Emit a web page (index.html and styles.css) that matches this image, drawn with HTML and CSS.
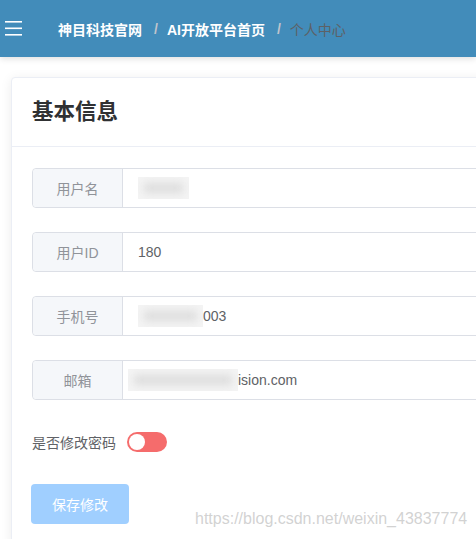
FILE: index.html
```html
<!DOCTYPE html>
<html lang="zh">
<head>
    <meta charset="UTF-8">
    <title>个人中心</title>
    <link rel="stylesheet" href="styles.css">
</head>
<body>
    <header class="topbar">
        <svg class="menu-icon" width="17" height="16" viewBox="0 0 17 16">
            <rect x="0" y="1" width="17" height="1.6" fill="#fff"/>
            <rect x="0" y="7.5" width="17" height="1.6" fill="#fff"/>
            <rect x="0" y="14" width="17" height="1.6" fill="#fff"/>
        </svg>
        <nav class="crumbs">
            <span class="crumb link">神目科技官网</span>
            <span class="sep">/</span>
            <span class="crumb link">AI开放平台首页</span>
            <span class="sep">/</span>
            <span class="crumb current">个人中心</span>
        </nav>
    </header>

    <main class="page">
        <div class="card">
            <div class="card-header">基本信息</div>
            <div class="card-body">
                <div class="field">
                    <div class="field-label">用户名</div>
                    <div class="field-value"><span class="blur w50"></span></div>
                </div>
                <div class="field">
                    <div class="field-label">用户ID</div>
                    <div class="field-value">180</div>
                </div>
                <div class="field">
                    <div class="field-label">手机号</div>
                    <div class="field-value"><span class="blur w67"></span>003</div>
                </div>
                <div class="field">
                    <div class="field-label">邮箱</div>
                    <div class="field-value mail"><span class="blur w110"></span>ision.com</div>
                </div>

                <div class="switch-row">
                    <span class="switch-label">是否修改密码</span>
                    <span class="switch"><span class="knob"></span></span>
                </div>

                <button class="btn-save" disabled>保存修改</button>
            </div>
        </div>
    </main>

    <div class="watermark">https://blog.csdn.net/weixin_43837774</div>
</body>
</html>
```

FILE: styles.css
```css
body {
    margin: 0;
    padding: 0;
    width: 476px;
    height: 539px;
    overflow: hidden;
    background-color: #fff;
    font-family: "Liberation Sans", "Noto Sans CJK SC", sans-serif;
    position: relative;
}

.topbar {
    height: 57px;
    background-color: #428cba;
    display: flex;
    align-items: center;
    box-shadow: 0 2px 6px rgba(0, 0, 0, 0.12);
    position: relative;
    z-index: 2;
}

.menu-icon {
    margin-left: 5px;
    margin-top: -1px;
}

.crumbs {
    margin-left: 36px;
    display: flex;
    align-items: center;
    font-size: 14px;
}

.crumb.link {
    color: #fff;
    font-weight: bold;
}

.crumb.current {
    color: #5d6166;
}

.sep {
    color: #c0c4cc;
    margin: 0 9px 0 12px;
    font-weight: bold;
}

.page {
    padding: 20px 0 0 11px;
    overflow: hidden;
}

.card {
    margin-right: -40px;
    background-color: #fff;
    border: 1px solid #ebeef5;
    border-radius: 4px;
    box-shadow: 0 2px 12px rgba(0, 0, 0, 0.08);
}

.card-header {
    height: 68px;
    line-height: 68px;
    padding: 0 20px;
    border-bottom: 1px solid #ebeef5;
    font-size: 21.5px;
    font-weight: bold;
    color: #303133;
}

.card-body {
    padding: 21px 20px 20px 20px;
}

.field {
    display: flex;
    height: 40px;
    margin-bottom: 24px;
    border: 1px solid #dcdfe6;
    border-radius: 4px;
    box-sizing: border-box;
    font-size: 14px;
}

.field-label {
    width: 89px;
    background-color: #f5f7fa;
    border-right: 1px solid #dcdfe6;
    border-radius: 4px 0 0 4px;
    color: #909399;
    display: flex;
    align-items: center;
    justify-content: center;
}

.field-value {
    flex: 1;
    display: flex;
    align-items: center;
    padding-left: 15px;
    color: #606266;
}

.field-value.mail {
    padding-left: 5px;
}

.blur {
    display: inline-block;
    height: 22px;
    background-color: #f4f4f4;
    position: relative;
    overflow: hidden;
}

.blur::after {
    content: "";
    position: absolute;
    left: 6px;
    right: 6px;
    top: 6px;
    bottom: 6px;
    background-color: #dcdcdc;
    filter: blur(4px);
}

.w50 { width: 51px; }
.w67 { width: 65px; }
.w110 { width: 110px; }

.switch-row {
    display: flex;
    align-items: center;
    height: 40px;
    margin-top: -2px;
    margin-bottom: 22px;
}

.switch-label {
    font-size: 14px;
    color: #606266;
    margin-right: 11px;
}

.switch {
    width: 40px;
    height: 20px;
    border-radius: 10px;
    background-color: #f56c6c;
    position: relative;
}

.knob {
    position: absolute;
    left: 2px;
    top: 2px;
    width: 16px;
    height: 16px;
    border-radius: 50%;
    background-color: #fff;
}

.btn-save {
    margin-left: -1px;
    width: 98px;
    height: 40px;
    border: none;
    border-radius: 4px;
    background-color: #a0cfff;
    color: #fff;
    font-size: 14px;
    font-family: "Liberation Sans", "Noto Sans CJK SC", sans-serif;
}

.watermark {
    position: absolute;
    left: 195px;
    top: 510px;
    font-size: 16px;
    color: rgba(190, 190, 190, 0.7);
    font-family: "Liberation Sans", sans-serif;
}
```
